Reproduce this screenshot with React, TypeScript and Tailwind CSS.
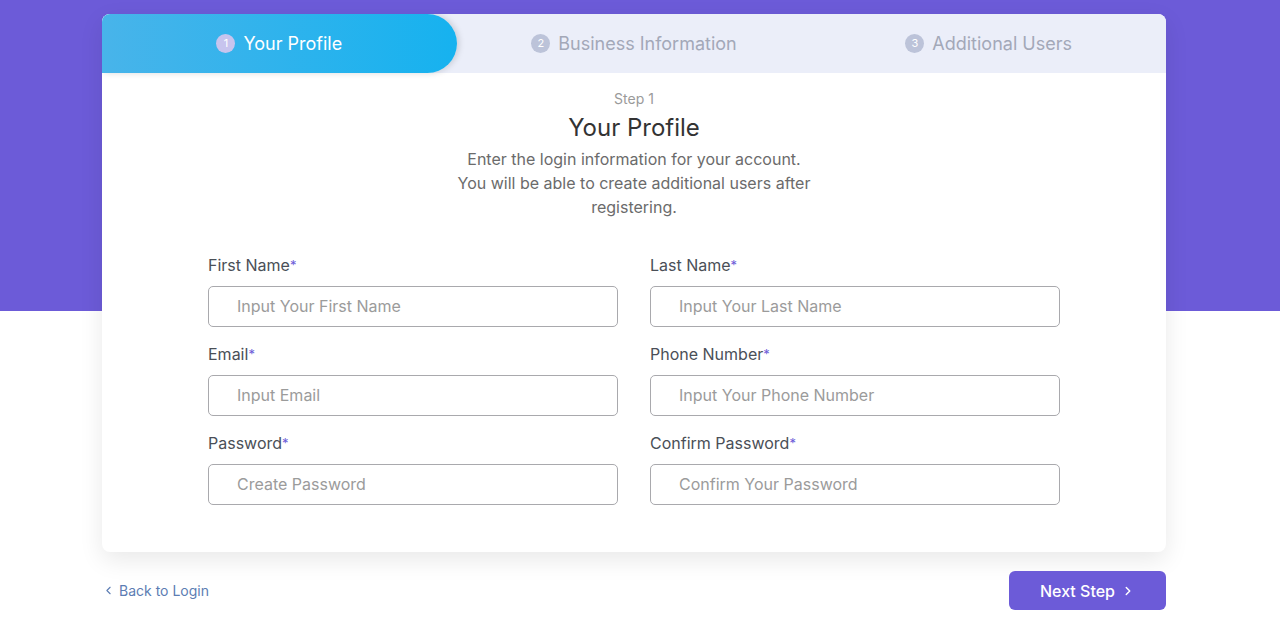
import { ChevronLeft, ChevronRight } from "lucide-react";

const steps = ["Your Profile", "Business Information", "Additional Users"];

const fields = [
    { label: "First Name", placeholder: "Input Your First Name" },
    { label: "Last Name", placeholder: "Input Your Last Name" },
    { label: "Email", placeholder: "Input Email" },
    { label: "Phone Number", placeholder: "Input Your Phone Number" },
    { label: "Password", placeholder: "Create Password" },
    { label: "Confirm Password", placeholder: "Confirm Your Password" },
];

const Field: React.FC<{ label: string; placeholder: string }> = ({ label, placeholder }) => {
    return <label className="flex flex-col">
        <span className="text-[16px] leading-6 text-[#4a4f57] mb-[9px]">
            {label}<span className="text-[#6c5bd8] text-[13px] align-top">*</span>
        </span>
        <input
            placeholder={placeholder}
            className="h-[41px] rounded-[5px] border border-[#a9a9ad] px-7 pb-[2px] text-[16px] text-[#444] placeholder:text-[#9b9b9b] outline-none"
        />
    </label>
}

export default function App() {
    return <div className="min-h-[621px] bg-[linear-gradient(to_bottom,#6c5bd8_311px,#ffffff_311px)] pt-[14px] font-['Inter','Open_Sans',sans-serif]">
        <div className="w-[1064px] mx-[102px]">
            <section className="rounded-lg bg-white shadow-[0_8px_24px_rgba(0,0,0,0.09)] overflow-hidden">
                <div className="grid grid-cols-3 h-[59px] bg-[#ebeef9]">
                    {steps.map((s, i) => (
                        <div key={s} className={i === 0
                            ? "flex items-center justify-center gap-2 rounded-r-full bg-[linear-gradient(to_right,#48b4ea,#16b2ef)] shadow-[2px_0_6px_rgba(0,0,0,0.15)] text-white"
                            : "flex items-center justify-center gap-2 text-[#a3a8b8]"}>
                            <span className={i === 0
                                ? "w-[19px] h-[19px] rounded-full bg-[#c7c4ee] text-white text-[11px] grid place-content-center"
                                : "w-[19px] h-[19px] rounded-full bg-[#bcc3d9] text-white text-[11px] grid place-content-center"}>{i + 1}</span>
                            <span className="text-[18px]">{s}</span>
                        </div>
                    ))}
                </div>
                <div className="px-[106px] pt-4 pb-[47px]">
                    <div className="flex flex-col items-center text-center">
                        <p className="text-[14px] leading-5 text-[#9a9a9a]">Step 1</p>
                        <h2 className="mt-[3px] text-[24px] leading-8 text-[#333]">Your Profile</h2>
                        <p className="mt-[3px] w-[380px] text-[16px] leading-6 text-[#6b6b6b]">
                            Enter the login information for your account.<br />
                            You will be able to create additional users after registering.
                        </p>
                    </div>
                    <div className="grid grid-cols-2 gap-x-8 gap-y-[15px] mt-[34px]">
                        {fields.map(f => <Field key={f.label} {...f} />)}
                    </div>
                </div>
            </section>
            <div className="flex items-center justify-between mt-[19px]">
                <a className="flex items-center gap-1 text-[14px] text-[#5c7db3] cursor-pointer">
                    <ChevronLeft size={13} strokeWidth={2} />
                    Back to Login
                </a>
                <button className="flex items-center gap-1.5 h-[39px] w-[157px] justify-center rounded-md bg-[#6c5bd8] text-white text-[16px] font-medium">
                    Next Step
                    <ChevronRight size={14} strokeWidth={2.5} />
                </button>
            </div>
        </div>
    </div>
}
